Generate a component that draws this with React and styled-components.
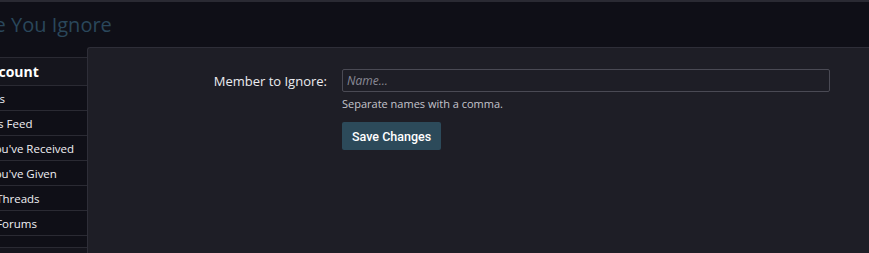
import React from 'react';
import styled, { createGlobalStyle } from 'styled-components';

const GlobalStyle = createGlobalStyle`
  html, body {
    margin: 0;
    padding: 0;
    background: #0f0f17;
    overflow: hidden;
  }
  body {
    font-family: "Open Sans", "Noto Sans", sans-serif;
    color: #e4e4e8;
  }
`;

const links = [
  'Your Alerts',
  'Your News Feed',
  "Ratings You've Received",
  "Ratings You've Given",
  'Watched Threads',
  'Watched Forums',
];

const App = () => (
  <>
    <GlobalStyle />
    <Viewport>
      <TopRule />
      <Page>
        <TitleBar>
          <Title>People You Ignore</Title>
        </TitleBar>
        <Columns>
          <Sidebar>
            <SideHeading>Your Account</SideHeading>
            {links.map(l => (
              <SideLink key={l}>{l}</SideLink>
            ))}
            <SideLink spacer />
            <SideHeading small />
          </Sidebar>
          <Panel>
            <Form>
              <Label htmlFor="ignore">Member to Ignore:</Label>
              <Field>
                <Input id="ignore" placeholder="Name..." />
                <Hint>Separate names with a comma.</Hint>
                <SaveButton>Save Changes</SaveButton>
              </Field>
            </Form>
          </Panel>
        </Columns>
      </Page>
    </Viewport>
  </>
);

export default App;

const Viewport = styled.div`
  width: 869px;
  height: 253px;
  overflow: hidden;
  background: #0f0f17;
`;

const TopRule = styled.div`
  height: 2px;
  background: #2a2a33;
`;

const Page = styled.div`
  margin-left: -65px;
`;

const TitleBar = styled.div`
  height: 45px;
  display: flex;
  align-items: center;
  padding-left: 7px;
`;

const Title = styled.h1`
  margin: 0;
  font-size: 20px;
  font-weight: 400;
  color: #2a475b;
  line-height: 1;
  padding-top: 1px;
`;

const Columns = styled.div`
  display: flex;
  align-items: flex-start;
`;

const Sidebar = styled.div`
  width: 152px;
  margin-top: 10px;
  flex-shrink: 0;
  background: #0f0f17;
  border-top: 1px solid #2a2a33;
`;

const SideHeading = styled.div`
  height: ${p => (p.small ? '8px' : '27px')};
  display: flex;
  align-items: center;
  padding-left: 10px;
  font-size: 14px;
  font-weight: 700;
  color: #ffffff;
  background: #15151d;
  border-bottom: 1px solid #2a2a33;
`;

const SideLink = styled.div`
  height: ${p => (p.spacer ? '11px' : '24px')};
  display: flex;
  align-items: center;
  padding-left: 11px;
  font-size: 11.5px;
  color: #f0f0f4;
  white-space: nowrap;
  border-bottom: 1px solid #2a2a33;
`;

const Panel = styled.div`
  flex: 1;
  min-height: 240px;
  background: #1e1e26;
  border-top: 1px solid #2e2e38;
  border-left: 1px solid #2e2e38;
  border-top-left-radius: 3px;
`;

const Form = styled.div`
  display: grid;
  grid-template-columns: 239px 488px;
  column-gap: 15px;
  padding-top: 21px;
`;

const Label = styled.label`
  text-align: right;
  font-size: 13px;
  color: #ececf0;
  padding-top: 3px;
`;

const Field = styled.div`
  display: flex;
  flex-direction: column;
  align-items: flex-start;
`;

const Input = styled.input`
  box-sizing: border-box;
  width: 488px;
  height: 23px;
  padding: 0 4px;
  background: #1e1e26;
  border: 1px solid #4a4a54;
  border-radius: 2px;
  color: #e4e4e8;
  font-family: "Open Sans", sans-serif;
  font-size: 12px;
  outline: none;

  &::placeholder {
    color: #8a8a96;
    font-style: italic;
  }
`;

const Hint = styled.div`
  margin-top: 4px;
  font-size: 11px;
  color: #c4c4cc;
`;

const SaveButton = styled.button`
  margin-top: 11px;
  height: 28px;
  padding: 0 10px;
  background: #2c4a5a;
  border: none;
  border-radius: 2px;
  color: #ffffff;
  font-family: Roboto, "Liberation Sans", sans-serif;
  font-weight: 500;
  font-size: 12.5px;
`;
